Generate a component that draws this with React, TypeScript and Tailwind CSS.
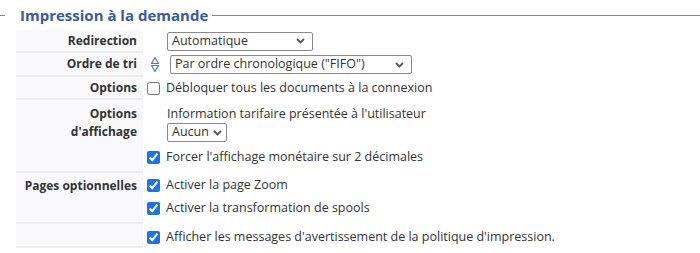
import React from 'react';

function Chevron() {
  return (
    <svg width="9" height="6" viewBox="0 0 9 6" className="shrink-0">
      <path d="M1 1l3.5 3.5L8 1" fill="none" stroke="#555" strokeWidth="1.8" />
    </svg>
  );
}

function FakeSelect({ value, width }: { value: string; width: string }) {
  return (
    <div
      className={`${width} h-[19px] flex items-center justify-between gap-[4px] border border-[#8a8a8a] rounded-[2px] bg-white pl-[4px] pr-[7px] text-[12.5px] text-[#333] leading-none`}
    >
      <span>{value}</span>
      <Chevron />
    </div>
  );
}

function SortIcon() {
  return (
    <svg width="10" height="17" viewBox="0 0 10 17" className="shrink-0">
      <path d="M5 1.5L8.5 7.5H1.5Z" fill="none" stroke="#4a78c8" strokeWidth="1.2" strokeLinejoin="round" />
      <path d="M1.5 9.5H8.5L5 15.5Z" fill="none" stroke="#4a78c8" strokeWidth="1.2" strokeLinejoin="round" />
    </svg>
  );
}

function Check({ checked, label }: { checked?: boolean; label: string }) {
  return (
    <label className="flex items-center h-[18px] gap-[6px] text-[12.5px] text-[#333]">
      <input
        type="checkbox"
        defaultChecked={checked}
        className="m-0 w-[13px] h-[13px] accent-[#1a73e8]"
      />
      <span>{label}</span>
    </label>
  );
}

function Row({
  label,
  height,
  align = 'items-center',
  children,
}: {
  label: React.ReactNode;
  height: string;
  align?: string;
  children?: React.ReactNode;
}) {
  return (
    <div className={`flex ${height}`}>
      <div
        className={`w-[127px] shrink-0 flex ${align} justify-end text-right pr-[6px] bg-[#f9f9fb] border-b-2 border-[#ededed] font-bold text-[12px] text-[#333] leading-[18px] whitespace-nowrap`}
      >
        {label}
      </div>
      <div className={`flex-1 flex ${align} pl-[4px]`}>{children}</div>
    </div>
  );
}

export default function App() {
  return (
    <div className="w-[700px] h-[253px] bg-white overflow-hidden font-['Open_Sans',sans-serif]">
      {/* Legend */}
      <div className="flex items-center h-[22px] mt-[4px]">
        <div className="w-[5px] h-px bg-[#888]" />
        <h2 className="ml-[15px] text-[15px] font-bold text-[#3b5a9a] leading-none">
          Impression à la demande
        </h2>
        <div className="flex-1 h-px bg-[#888] ml-[4px]" />
      </div>

      <div className="ml-[16px] mt-[4px]">
        <Row label="Redirection" height="h-[23px]">
          <div className="pl-[20px] pb-[1px]">
            <FakeSelect value="Automatique" width="w-[146px]" />
          </div>
        </Row>

        <Row label="Ordre de tri" height="h-[24px]">
          <div className="flex items-center gap-[10px] pl-[3px] pb-[1px]">
            <SortIcon />
            <FakeSelect value='Par ordre chronologique ("FIFO")' width="w-[242px]" />
          </div>
        </Row>

        <Row label="Options" height="h-[23px]">
          <div className="pb-[1px]">
            <Check label="Débloquer tous les documents à la connexion" />
          </div>
        </Row>

        <Row
          label={
            <div className="pt-[5px]">
              Options
              <br />
              d'affichage
            </div>
          }
          height="h-[73px]"
          align="items-start"
        >
          <div className="flex flex-col pt-[5px]">
            <div className="pl-[20px] h-[17px] leading-[17px] text-[12.5px] text-[#333]">
              Information tarifaire présentée à l'utilisateur
            </div>
            <div className="pl-[20px] mt-[1px]">
              <FakeSelect value="Aucun" width="w-[60px]" />
            </div>
            <div className="mt-[6px]">
              <Check checked label="Forcer l'affichage monétaire sur 2 décimales" />
            </div>
          </div>
        </Row>

        <Row
          label={<div className="pt-[4px]">Pages optionnelles</div>}
          height="h-[51px]"
          align="items-start"
        >
          <div className="flex flex-col gap-[5px] pt-[3px]">
            <Check checked label="Activer la page Zoom" />
            <Check checked label="Activer la transformation de spools" />
          </div>
        </Row>

        <Row label="" height="h-[24px]">
          <div className="pt-[3px]">
            <Check
              checked
              label="Afficher les messages d'avertissement de la politique d'impression."
            />
          </div>
        </Row>
      </div>
    </div>
  );
}
